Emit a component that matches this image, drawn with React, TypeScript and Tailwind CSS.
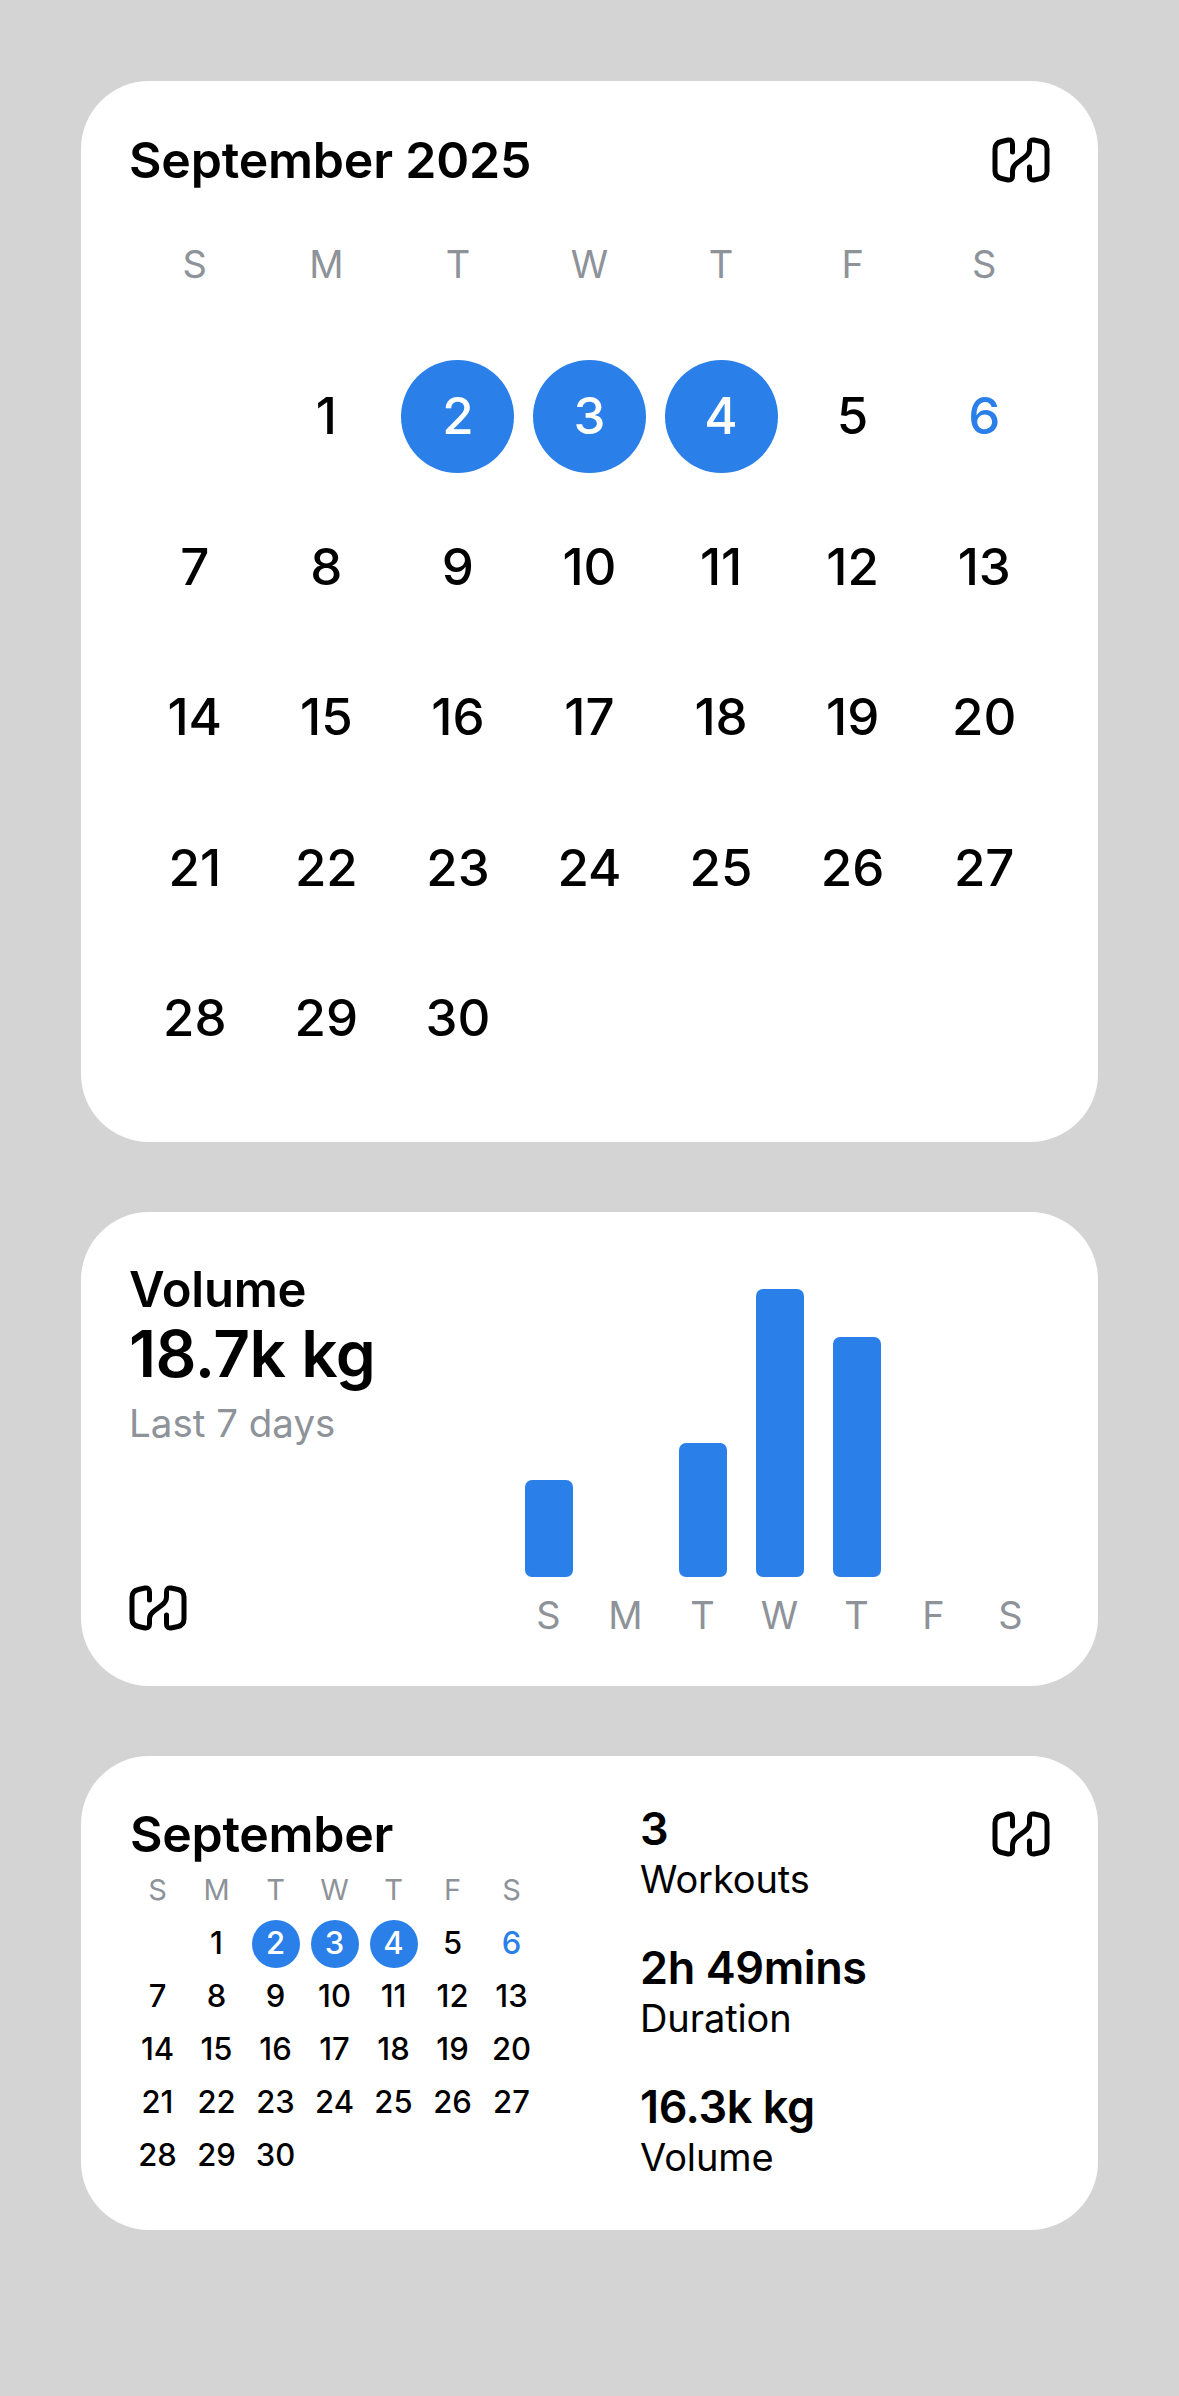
import React from "react";

const WEEK = ["S", "M", "T", "W", "T", "F", "S"];
const DAYS: (number | null)[] = [null, ...Array.from({ length: 30 }, (_, i) => i + 1)];
const BARS = [97, 0, 134, 288, 240, 0, 0];

function Logo() {
  return (
    <svg viewBox="0 0 58 46" className="block h-[46px] w-[58px]" fill="none" stroke="#000" strokeWidth="5" strokeLinecap="round" strokeLinejoin="round">
      <path d="M20.5 15V7Q20.5 2.5 16 3L9.5 4.5Q3 6 3 12V34Q3 40 9.5 41.5L16 43Q20.5 43.5 20.5 39V34Q20.5 29.5 25 26L33 20Q37.5 16.5 37.5 12V7Q37.5 2.5 42 3L49 4.5Q55 6 55 12V34Q55 40 49 41.5L42 43Q37.5 43.5 37.5 39V30" />
    </svg>
  );
}

function Day({ day, big }: { day: number | null; big?: boolean }) {
  const active = day === 2 || day === 3 || day === 4;
  const size = big ? "h-[113px] w-[113px] text-[51px]" : "h-[48px] w-[48px] text-[31px]";
  return (
    <div className="flex items-center justify-center">
      <div
        className={`flex items-center justify-center rounded-full font-medium ${size} ${
          active ? "bg-[#2a7fe8] text-white" : day === 6 ? "text-[#2a7fe8]" : "text-black"
        }`}
      >
        {day}
      </div>
    </div>
  );
}

function Stat({ value, label }: { value: string; label: string }) {
  return (
    <div className="flex flex-col">
      <div className="h-[50px] text-[45px] leading-[50px] font-semibold tracking-[-0.4px] text-black">{value}</div>
      <div className="h-[50px] text-[38px] leading-[50px] tracking-[-0.1px] text-black">{label}</div>
    </div>
  );
}

export default function App() {
  return (
    <div className="flex min-h-[2396px] w-[1179px] flex-col gap-[70px] bg-[#d4d4d4] px-[81px] pt-[81px] font-['Inter',sans-serif]">
      {/* month */}
      <div className="h-[1061px] rounded-[68px] bg-white px-[48px] pt-[49px]">
        <div className="flex h-[60px] items-center justify-between">
          <div className="text-[50px] leading-[60px] font-semibold tracking-[-0.2px] text-black">September 2025</div>
          <Logo />
        </div>
        <div className="mt-[46px] grid h-[50px] grid-cols-7 items-center text-center text-[38px] text-[#8e9299]">
          {WEEK.map((d, i) => (
            <div key={i}>{d}</div>
          ))}
        </div>
        <div className="mt-[55px] grid auto-rows-[150.5px] grid-cols-7 items-center">
          {DAYS.map((d, i) => (
            <Day key={i} day={d} big />
          ))}
        </div>
      </div>

      {/* volume */}
      <div className="flex h-[474px] rounded-[68px] bg-white pl-[48px] pt-[50px]">
        <div className="flex w-[381px] flex-col">
          <div className="h-[56px] text-[49px] leading-[56px] font-semibold tracking-[-0.2px] text-black">Volume</div>
          <div className="h-[72px] text-[64px] leading-[72px] font-semibold tracking-[-0.5px] text-black">18.7k kg</div>
          <div className="mt-[8px] h-[50px] text-[38.5px] leading-[50px] text-[#8e9299]">Last 7 days</div>
          <div className="mt-auto mb-[55px]">
            <Logo />
          </div>
        </div>
        <div className="flex flex-col pt-[27px]">
          <div className="grid h-[288px] grid-cols-[repeat(7,77px)] items-end justify-items-center">
            {BARS.map((h, i) => (
              <div key={i} className="w-[48px] rounded-[7px] bg-[#2a7fe8]" style={{ height: h }} />
            ))}
          </div>
          <div className="mt-[10px] grid h-[50px] grid-cols-[repeat(7,77px)] items-center text-center text-[38px] text-[#8e9299]">
            {WEEK.map((d, i) => (
              <div key={i}>{d}</div>
            ))}
          </div>
        </div>
      </div>

      {/* summary */}
      <div className="relative flex h-[474px] rounded-[68px] bg-white pl-[47px] pt-[48px]">
        <div className="w-[512px]">
          <div className="h-[60px] pl-[2px] text-[50px] leading-[60px] font-semibold tracking-[-0.3px] text-black">September</div>
          <div className="mt-[4px] grid h-[38px] w-[413px] grid-cols-7 items-center text-center text-[29px] text-[#8e9299]">
            {WEEK.map((d, i) => (
              <div key={i}>{d}</div>
            ))}
          </div>
          <div className="mt-[11px] grid w-[413px] auto-rows-[53px] grid-cols-7 items-center">
            {DAYS.map((d, i) => (
              <Day key={i} day={d} />
            ))}
          </div>
        </div>
        <div className="flex flex-col gap-[39px]">
          <Stat value="3" label="Workouts" />
          <Stat value="2h 49mins" label="Duration" />
          <Stat value="16.3k kg" label="Volume" />
        </div>
        <div className="absolute top-[55px] right-[48px]">
          <Logo />
        </div>
      </div>
    </div>
  );
}
